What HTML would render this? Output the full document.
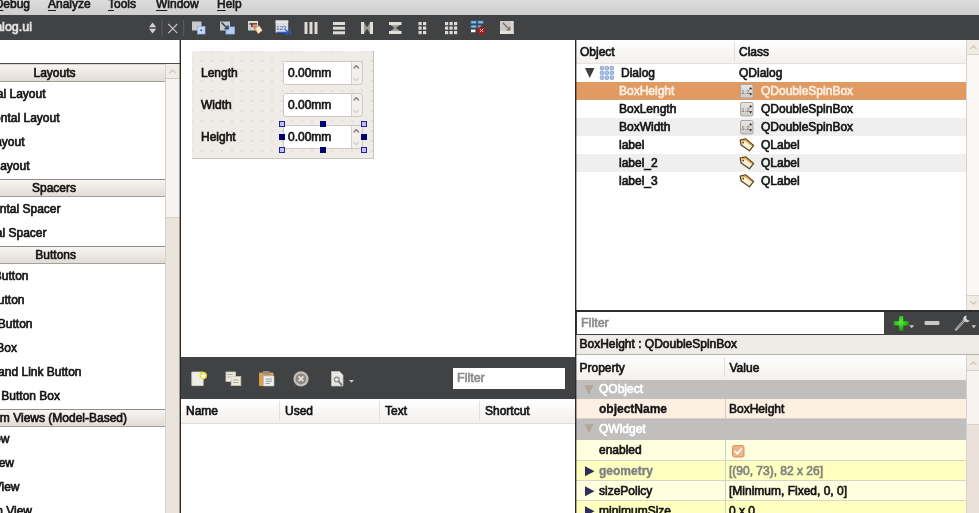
<!DOCTYPE html>
<html><head><meta charset="utf-8"><title>Qt Designer</title>
<style>
html,body{margin:0;padding:0;}
body{width:979px;height:513px;overflow:hidden;position:relative;background:#fff;font-family:"Liberation Sans",sans-serif;font-size:12px;color:#141414;-webkit-text-stroke:0.65px;}
.a{position:absolute;white-space:nowrap;}
svg{position:absolute;overflow:visible;}
#menubar{left:0;top:0;width:979px;height:15px;background:linear-gradient(#dcdcdc,#cecece);overflow:hidden;}
#menubar .m{position:absolute;top:-4px;line-height:16px;color:#1a1a1a;}
#menubar u{text-decoration-thickness:1px;text-underline-offset:1.5px;}
.dark{background:#404244;}
.hdr{position:absolute;left:-57px;width:222px;height:16px;border-top:1px solid #8e8a86;border-bottom:1px solid #a39f9b;background:linear-gradient(#f7f4f1,#e2dcd6);}
.hdr span{position:absolute;top:0;line-height:16px;white-space:nowrap;}
.it{position:absolute;height:24px;line-height:24px;white-space:nowrap;}
.row{position:absolute;left:576px;width:390px;height:18px;}
.row span,.prow span{position:absolute;top:0;white-space:nowrap;}
.row span{line-height:18px;}
.prow{position:absolute;left:576px;width:390px;}
.th{position:absolute;background:linear-gradient(#ffffff,#f3f0ed);}
.th span{position:absolute;white-space:nowrap;}
.sb{position:absolute;background:#f6f3f0;border-left:1px solid #d6d1cc;}
.sbb{position:absolute;left:0;width:14px;background:#f2ece6;}
.b{font-weight:bold;-webkit-text-stroke:0;}
</style></head><body><div id="root" style="position:absolute;left:0;top:0;width:979px;height:513px;will-change:transform;">
<div id="menubar" class="a">
 <span class="m" style="right:949px"><u>D</u>ebug</span>
 <span class="m" style="left:48px"><u>A</u>nalyze</span>
 <span class="m" style="left:108px"><u>T</u>ools</span>
 <span class="m" style="left:156px"><u>W</u>indow</span>
 <span class="m" style="left:217px"><u>H</u>elp</span>
</div>
<div class="a dark" style="left:0;top:15px;width:979px;height:25px;"></div>
<div class="a" style="right:947px;top:15px;height:25px;line-height:25px;color:#e6e6e6;font-size:12.5px;">dialog.ui</div>
<svg style="left:0;top:15px" width="979" height="25" viewBox="0 15 979 25">
 <path d="M149 27.2 L152.6 22.6 L156.2 27.2 Z M149 28.8 L152.6 33.4 L156.2 28.8 Z" fill="#d2d2d2"/>
 <rect x="161.5" y="20" width="1" height="16" fill="#5c5e60"/>
 <path d="M168.3 24 L177.3 33.2 M177.3 24 L168.3 33.2" stroke="#c4c4c4" stroke-width="1.1" fill="none"/>
 <rect x="183.2" y="20" width="1" height="16" fill="#5c5e60"/>
 <!-- icon1 -->
 <rect x="192" y="21.5" width="9.5" height="9" fill="#c9c9c9"/>
 <rect x="197.5" y="26.5" width="7.5" height="7.5" fill="#c4dcfa" stroke="#8fb4e8" stroke-width="0.8"/>
 <rect x="200.5" y="29.5" width="1.6" height="1.6" fill="#2a4a7a"/>
 <!-- icon2 -->
 <rect x="220" y="21.5" width="10" height="9" fill="#c9c9c9"/>
 <rect x="226" y="27" width="8.4" height="7" fill="#b4cff2" stroke="#8fb4e8" stroke-width="0.8"/>
 <path d="M221.5 22.5 L227.5 28.5 M224.5 28.8 L228 28.8 L228 25.2" stroke="#2c4668" stroke-width="1.6" fill="none"/>
 <!-- icon3 -->
 <rect x="248" y="21" width="10" height="9.5" fill="#c8d2cc"/>
 <rect x="248" y="21" width="10" height="2" fill="#e4dcd6"/>
 <path d="M249.5 23.2 H257 V24.6 H252.6 V27 H251.2 V24.6 H249.5 Z" fill="#4a2a22"/>
 <path d="M252.4 25 L257.4 26 L255 30.4 Z" fill="#e8704a"/>
 <path d="M255.2 28.6 L259 25.8 L262.2 30.4 L258.2 33.6 Z" fill="#fff0dc" stroke="#eea36e" stroke-width="1"/>
 <!-- icon4 -->
 <rect x="275.6" y="20.5" width="12.6" height="12" fill="#d6dbe4"/>
 <rect x="275.6" y="20.5" width="12.6" height="2.5" fill="#e8e6e4"/>
 <text x="276.3" y="29.6" font-size="6" fill="#3a58b0" style="-webkit-text-stroke:0">123</text>
 <path d="M277 32.3 L288 32.3 M285.5 29.8 L288.3 32.3 L285.5 34.8 M290.3 29.5 L290.3 35" stroke="#2a5ad8" stroke-width="1.3" fill="none"/>
 <!-- icon5 vertical bars -->
 <rect x="304.5" y="22" width="3" height="12" fill="#dedad6"/><rect x="309.5" y="22" width="3" height="12" fill="#dedad6"/><rect x="314.5" y="22" width="3" height="12" fill="#dedad6"/>
 <!-- icon6 horizontal bars -->
 <rect x="333" y="22" width="12" height="3" fill="#dedad6"/><rect x="333" y="26.7" width="12" height="3" fill="#dedad6"/><rect x="333" y="31.3" width="12" height="3" fill="#dedad6"/>
 <!-- icon7 H splitter -->
 <rect x="361" y="22" width="3.2" height="12" fill="#e2deda"/><rect x="369.8" y="22" width="3.2" height="12" fill="#e2deda"/>
 <path d="M364.2 23 L367.4 28 L364.2 33 Z" fill="#a3a19d"/><path d="M369.8 23 L366.6 28 L369.8 33 Z" fill="#a3a19d"/>
 <!-- icon8 V splitter -->
 <rect x="389" y="22" width="12.5" height="3" fill="#e2deda"/><rect x="389" y="31" width="12.5" height="3" fill="#e2deda"/>
 <path d="M390.5 25 L400 25 L395.2 28.4 Z" fill="#a3a19d"/><path d="M390.5 31 L400 31 L395.2 27.6 Z" fill="#a3a19d"/>
 <!-- icon9 2x3 grid -->
 <g fill="#dedad6"><rect x="418.5" y="22" width="3.2" height="3.2"/><rect x="423" y="22" width="3.2" height="3.2"/><rect x="418.5" y="26.5" width="3.2" height="3.2"/><rect x="423" y="26.5" width="3.2" height="3.2"/><rect x="418.5" y="31" width="3.2" height="3.2"/><rect x="423" y="31" width="3.2" height="3.2"/></g>
 <!-- icon10 3x3 grid -->
 <g fill="#dedad6"><rect x="445" y="22" width="3.2" height="3.2"/><rect x="449.5" y="22" width="3.2" height="3.2"/><rect x="454" y="22" width="3.2" height="3.2"/><rect x="445" y="26.5" width="3.2" height="3.2"/><rect x="449.5" y="26.5" width="3.2" height="3.2"/><rect x="454" y="26.5" width="3.2" height="3.2"/><rect x="445" y="31" width="3.2" height="3.2"/><rect x="449.5" y="31" width="3.2" height="3.2"/><rect x="454" y="31" width="3.2" height="3.2"/></g>
 <!-- icon11 break layout -->
 <g fill="#8fbfea" stroke="#3a78b0" stroke-width="0.7"><rect x="471" y="21" width="5.2" height="2.6"/><rect x="478" y="21" width="5.2" height="2.6"/><rect x="471" y="25.2" width="5.2" height="2.6"/><rect x="478" y="25.2" width="3" height="2.6"/></g>
 <rect x="471" y="29.6" width="4.4" height="2.6" fill="#ffffff"/>
 <circle cx="481.6" cy="30.4" r="4" fill="#a81a20"/>
 <path d="M479.9 28.7 L483.3 32.1 M483.3 28.7 L479.9 32.1" stroke="#f0c8c8" stroke-width="1"/>
 <!-- icon12 adjust size -->
 <rect x="500" y="21" width="13.5" height="13" fill="#cdc9c4"/>
 <rect x="500" y="30.8" width="13.5" height="3.2" fill="#e6e2de"/><rect x="510.6" y="21" width="2.9" height="13" fill="#dedad6"/>
 <path d="M503 23 L509.4 29.6 M506.4 30 L509.8 30 L509.8 26.6" stroke="#6f6b67" stroke-width="1.2" fill="none"/>
</svg>
<div class="a" style="left:0;top:63px;width:180px;height:1px;background:#4a4a4a;"></div>
<div class="hdr" style="top:64px;border-top-color:#d8d4d0"></div><div class="a" style="top:65px;right:903.5px;line-height:16px;">Layouts</div>
<div class="hdr" style="top:179px"></div><div class="a" style="top:180px;right:903px;line-height:16px;">Spacers</div>
<div class="hdr" style="top:246px"></div><div class="a" style="top:247px;right:903px;line-height:16px;">Buttons</div>
<div class="hdr" style="top:409px"></div><div class="a" style="top:410px;right:852px;line-height:16px;">Item Views (Model-Based)</div>
<div class="it" style="top:82px;right:933.5px">Vertical Layout</div>
<div class="it" style="top:106px;right:919.5px">Horizontal Layout</div>
<div class="it" style="top:130px;right:954.5px">Grid Layout</div>
<div class="it" style="top:154px;right:949.5px">Form Layout</div>
<div class="it" style="top:197px;right:918.5px">Horizontal Spacer</div>
<div class="it" style="top:221px;right:932.5px">Vertical Spacer</div>
<div class="it" style="top:264px;right:950.5px">Push Button</div>
<div class="it" style="top:288px;right:954.5px">Tool Button</div>
<div class="it" style="top:312px;right:946.5px">Radio Button</div>
<div class="it" style="top:336px;right:962px">Check Box</div>
<div class="it" style="top:360px;right:897.5px">Command Link Button</div>
<div class="it" style="top:384px;right:919px">Dialog Button Box</div>
<div class="it" style="top:427px;right:969.5px">List View</div>
<div class="it" style="top:451px;right:965px">Tree View</div>
<div class="it" style="top:475px;right:959.5px">Table View</div>
<div class="it" style="top:499px;right:947px">Column View</div>
<div class="sb" style="left:165px;top:64px;width:14px;height:449px;background:#ebe4dd;">
 <div class="sbb" style="top:0;height:14px;border-bottom:1px solid #d2ccc6;"></div>
 <div style="position:absolute;left:0;top:15px;width:14px;height:138px;background:#f6f3f0;border-bottom:1px solid #d8d2cc"></div>
</div>
<svg style="left:165px;top:64px" width="15" height="15"><path d="M4.5 9 L7.5 5.8 L10.5 9" stroke="#cfc7bf" stroke-width="1.2" fill="none"/></svg>
<div class="a" style="left:180px;top:40px;width:1px;height:473px;background:#2a2a2a;"></div><div class="a" style="left:179px;top:40px;width:1px;height:473px;background:rgba(42,42,42,0.4);"></div>
<div class="a" style="left:192px;top:51px;width:181px;height:107px;background-color:#efebe7;border-right:1px solid #c9c5c1;border-bottom:1px solid #c9c5c1;background-image:radial-gradient(circle,#d6d0ca 0.55px,transparent 0.85px);background-size:10px 10px;background-position:-5px -5px;"></div>
<div class="a" style="left:201px;top:61px;height:24px;line-height:24px;">Length</div>
<div class="a" style="left:283px;top:61px;width:78px;height:22px;border:1px solid #cfc8c2;border-radius:3px;background:#f3efec;overflow:hidden;"><div style="position:absolute;left:0;top:0;width:67px;height:22px;background:#fff;border-right:1px solid #d6d0ca;"></div><span style="position:absolute;left:4px;top:0;line-height:23px;">0.00mm</span></div>
<svg style="left:350px;top:61px" width="13" height="24"><path d="M3.6 7.4 L6.3 4.6 L9 7.4" stroke="#6a6764" stroke-width="1.1" fill="none"/><path d="M3.6 17 L6.3 19.8 L9 17" stroke="#d2cdc8" stroke-width="1.1" fill="none"/></svg>
<div class="a" style="left:201px;top:93px;height:24px;line-height:24px;">Width</div>
<div class="a" style="left:283px;top:93px;width:78px;height:22px;border:1px solid #cfc8c2;border-radius:3px;background:#f3efec;overflow:hidden;"><div style="position:absolute;left:0;top:0;width:67px;height:22px;background:#fff;border-right:1px solid #d6d0ca;"></div><span style="position:absolute;left:4px;top:0;line-height:23px;">0.00mm</span></div>
<svg style="left:350px;top:93px" width="13" height="24"><path d="M3.6 7.4 L6.3 4.6 L9 7.4" stroke="#6a6764" stroke-width="1.1" fill="none"/><path d="M3.6 17 L6.3 19.8 L9 17" stroke="#d2cdc8" stroke-width="1.1" fill="none"/></svg>
<div class="a" style="left:201px;top:125px;height:24px;line-height:24px;">Height</div>
<div class="a" style="left:283px;top:125px;width:78px;height:22px;border:1px solid #cfc8c2;border-radius:3px;background:#f3efec;overflow:hidden;"><div style="position:absolute;left:0;top:0;width:67px;height:22px;background:#fff;border-right:1px solid #d6d0ca;"></div><span style="position:absolute;left:4px;top:0;line-height:23px;">0.00mm</span></div>
<svg style="left:350px;top:125px" width="13" height="24"><path d="M3.6 7.4 L6.3 4.6 L9 7.4" stroke="#6a6764" stroke-width="1.1" fill="none"/><path d="M3.6 17 L6.3 19.8 L9 17" stroke="#d2cdc8" stroke-width="1.1" fill="none"/></svg>
<div class="a" style="left:279px;top:121px;width:4px;height:4px;border:1px solid #2020a0;background:#c0c0f0;"></div>
<div class="a" style="left:361px;top:121px;width:4px;height:4px;border:1px solid #2020a0;background:#c0c0f0;"></div>
<div class="a" style="left:279px;top:147px;width:4px;height:4px;border:1px solid #2020a0;background:#c0c0f0;"></div>
<div class="a" style="left:361px;top:147px;width:4px;height:4px;border:1px solid #2020a0;background:#c0c0f0;"></div>
<div class="a" style="left:320px;top:121px;width:6px;height:6px;background:#00006e;"></div>
<div class="a" style="left:320px;top:147px;width:6px;height:6px;background:#00006e;"></div>
<div class="a" style="left:279px;top:134px;width:6px;height:6px;background:#00006e;"></div>
<div class="a" style="left:361px;top:134px;width:6px;height:6px;background:#00006e;"></div>
<div class="a dark" style="left:181px;top:357px;width:394px;height:42px;"></div>
<div class="a" style="left:453px;top:368px;width:112px;height:21px;background:#fff;"><span style="position:absolute;left:4px;line-height:21px;color:#8c8c8c;font-size:12.5px;">Filter</span></div>
<div class="th" style="left:181px;top:399px;width:394px;height:24px;border-bottom:1px solid #e2deda;"><span style="left:5px;line-height:25px;">Name</span><span style="left:104px;line-height:25px;">Used</span><span style="left:204px;line-height:25px;">Text</span><span style="left:304px;line-height:25px;">Shortcut</span><i style="position:absolute;left:98px;top:2px;width:1px;height:20px;background:#e4e0dc"></i><i style="position:absolute;left:198px;top:2px;width:1px;height:20px;background:#e4e0dc"></i><i style="position:absolute;left:298px;top:2px;width:1px;height:20px;background:#e4e0dc"></i></div>
<svg style="left:181px;top:357px" width="394" height="42" viewBox="181 357 394 42">
 <!-- new -->
 <path d="M191.8 372 L203.2 372 L203.2 385.6 L191.8 385.6 Z" fill="#efede8" stroke="#d6d4ce" stroke-width="0.8"/>
 <circle cx="203.2" cy="375.6" r="3.8" fill="#e9d838"/>
 <path d="M203.2 372.6 L204.1 374.7 L206.3 374.9 L204.6 376.4 L205.1 378.6 L203.2 377.4 L201.3 378.6 L201.8 376.4 L200.1 374.9 L202.3 374.7 Z" fill="#fffef4"/>
 <!-- copy -->
 <rect x="226" y="372" width="9.5" height="9.5" fill="#f0eadc" stroke="#cfc8b8" stroke-width="0.8"/>
 <rect x="231.2" y="376.6" width="9.6" height="9" fill="#f0eadc" stroke="#cfc8b8" stroke-width="0.8"/>
 <path d="M227.5 374.5 H233 M227.5 377 H230" stroke="#a0a09c" stroke-width="0.9"/>
 <path d="M233 380 H238.5 M233 382.5 H238.5" stroke="#a0a09c" stroke-width="0.9"/>
 <!-- paste -->
 <rect x="259" y="372.5" width="14.5" height="13.5" rx="1" fill="#d9a04e"/>
 <rect x="263" y="371" width="6.5" height="3.5" fill="#8e8e8a"/>
 <rect x="263.5" y="376" width="10.5" height="10" fill="#f2f2ee" stroke="#bdbdb8" stroke-width="0.6"/>
 <path d="M265.5 379 H272 M265.5 381.2 H272 M265.5 383.4 H270" stroke="#7f8fa8" stroke-width="0.9"/>
 <!-- delete -->
 <circle cx="301" cy="378.8" r="7.6" fill="#c2beba"/><circle cx="301" cy="378.8" r="5.4" fill="#8f8884"/>
 <path d="M298.6 376.4 L303.4 381.2 M303.4 376.4 L298.6 381.2" stroke="#ece2dc" stroke-width="1.7"/>
 <!-- configure -->
 <path d="M331.5 371.5 L339.5 371.5 L343 375 L343 386 L331.5 386 Z" fill="#e6e6e2" stroke="#bdbdb8" stroke-width="0.8"/>
 <circle cx="336.8" cy="379.6" r="2.4" fill="none" stroke="#8a8a86" stroke-width="1.2"/>
 <path d="M338.6 381.4 L342.2 385.4" stroke="#7a7a76" stroke-width="1.8"/>
 <path d="M349 380 L354 380 L351.5 382.8 Z" fill="#c8c8c8"/>
</svg>
<div class="a" style="left:575px;top:40px;width:1px;height:473px;background:#2a2a2a;"></div>
<div class="th" style="left:576px;top:40px;width:390px;height:23px;border-bottom:1px solid #e6e2de;"><span style="left:4px;line-height:24px;">Object</span><span style="left:163px;line-height:24px;">Class</span><i style="position:absolute;left:158px;top:2px;width:1px;height:19px;background:#e2deda"></i></div>
<div class="row" style="top:64px;background:#fff;"><span style="left:45px">Dialog</span><span style="left:163px">QDialog</span></div>
<div class="row" style="top:82px;background:#e09a62;color:#fbeee2;"><span style="left:43px">BoxHeight</span><span style="left:185px">QDoubleSpinBox</span></div>
<svg style="left:740px;top:84px" width="14" height="15"><defs><linearGradient id="sg82" x1="0" y1="0" x2="0" y2="1"><stop offset="0" stop-color="#e8e5e2"/><stop offset="1" stop-color="#cfcbc7"/></linearGradient></defs><rect x="0.5" y="0.5" width="12.5" height="13.5" rx="1.5" fill="url(#sg82)" stroke="#aaa6a2"/><text x="1.3" y="9.8" font-size="6" fill="#666" style="-webkit-text-stroke:0">1.2</text><path d="M9 5.2 L10.6 3 L12.2 5.2 Z M9 9.3 L10.6 11.5 L12.2 9.3 Z" fill="#2a2a2a"/></svg>
<div class="row" style="top:100px;background:#fff;"><span style="left:43px">BoxLength</span><span style="left:185px">QDoubleSpinBox</span></div>
<svg style="left:740px;top:102px" width="14" height="15"><defs><linearGradient id="sg100" x1="0" y1="0" x2="0" y2="1"><stop offset="0" stop-color="#e8e5e2"/><stop offset="1" stop-color="#cfcbc7"/></linearGradient></defs><rect x="0.5" y="0.5" width="12.5" height="13.5" rx="1.5" fill="url(#sg100)" stroke="#aaa6a2"/><text x="1.3" y="9.8" font-size="6" fill="#666" style="-webkit-text-stroke:0">1.2</text><path d="M9 5.2 L10.6 3 L12.2 5.2 Z M9 9.3 L10.6 11.5 L12.2 9.3 Z" fill="#2a2a2a"/></svg>
<div class="row" style="top:118px;background:#efefef;"><span style="left:43px">BoxWidth</span><span style="left:185px">QDoubleSpinBox</span></div>
<svg style="left:740px;top:120px" width="14" height="15"><defs><linearGradient id="sg118" x1="0" y1="0" x2="0" y2="1"><stop offset="0" stop-color="#e8e5e2"/><stop offset="1" stop-color="#cfcbc7"/></linearGradient></defs><rect x="0.5" y="0.5" width="12.5" height="13.5" rx="1.5" fill="url(#sg118)" stroke="#aaa6a2"/><text x="1.3" y="9.8" font-size="6" fill="#666" style="-webkit-text-stroke:0">1.2</text><path d="M9 5.2 L10.6 3 L12.2 5.2 Z M9 9.3 L10.6 11.5 L12.2 9.3 Z" fill="#2a2a2a"/></svg>
<div class="row" style="top:136px;background:#fff;"><span style="left:43px">label</span><span style="left:185px">QLabel</span></div>
<svg style="left:739px;top:138px" width="16" height="14"><path d="M1.2 2.2 L6.5 0.8 L14.6 7.4 L10.4 12.8 L2.2 7 Z" fill="#fbf3e2" stroke="#5e4218" stroke-width="1.3" stroke-linejoin="round"/><path d="M2.6 3.2 L6.2 2.3 L12.6 7.5" stroke="#e9a63a" stroke-width="1.3" fill="none"/><circle cx="4.2" cy="4.6" r="0.9" fill="#5e4218"/></svg>
<div class="row" style="top:154px;background:#efefef;"><span style="left:43px">label_2</span><span style="left:185px">QLabel</span></div>
<svg style="left:739px;top:156px" width="16" height="14"><path d="M1.2 2.2 L6.5 0.8 L14.6 7.4 L10.4 12.8 L2.2 7 Z" fill="#fbf3e2" stroke="#5e4218" stroke-width="1.3" stroke-linejoin="round"/><path d="M2.6 3.2 L6.2 2.3 L12.6 7.5" stroke="#e9a63a" stroke-width="1.3" fill="none"/><circle cx="4.2" cy="4.6" r="0.9" fill="#5e4218"/></svg>
<div class="row" style="top:172px;background:#fff;"><span style="left:43px">label_3</span><span style="left:185px">QLabel</span></div>
<svg style="left:739px;top:174px" width="16" height="14"><path d="M1.2 2.2 L6.5 0.8 L14.6 7.4 L10.4 12.8 L2.2 7 Z" fill="#fbf3e2" stroke="#5e4218" stroke-width="1.3" stroke-linejoin="round"/><path d="M2.6 3.2 L6.2 2.3 L12.6 7.5" stroke="#e9a63a" stroke-width="1.3" fill="none"/><circle cx="4.2" cy="4.6" r="0.9" fill="#5e4218"/></svg>
<svg style="left:584px;top:64px" width="32" height="18"><path d="M1 4 L10.5 4 L5.75 14 Z" fill="#3c3c3c"/>
<g fill="#a9c6e8" stroke="#6f8fbd" stroke-width="0.7"><rect x="16.3" y="2.4" width="3.4" height="3.4" rx="0.8"/><rect x="21.2" y="2.4" width="3.4" height="3.4" rx="0.8"/><rect x="26.1" y="2.4" width="3.4" height="3.4" rx="0.8"/><rect x="16.3" y="7.2" width="3.4" height="3.4" rx="0.8"/><rect x="21.2" y="7.2" width="3.4" height="3.4" rx="0.8"/><rect x="26.1" y="7.2" width="3.4" height="3.4" rx="0.8"/><rect x="16.3" y="12" width="3.4" height="3.4" rx="0.8"/><rect x="21.2" y="12" width="3.4" height="3.4" rx="0.8"/><rect x="26.1" y="12" width="3.4" height="3.4" rx="0.8"/></g></svg>
<div class="sb" style="left:966px;top:40px;width:13px;height:270px;background:#faf7f4;">
 <div class="sbb" style="top:0;height:14px;border-bottom:1px solid #d8d2cc;"></div>
 <div class="sbb" style="top:255px;height:15px;border-top:1px solid #d8d2cc;"></div>
</div>
<svg style="left:966px;top:40px" width="13" height="270"><path d="M4.5 9 L7.5 5.8 L10.5 9" stroke="#cfc7bf" stroke-width="1.2" fill="none"/><path d="M4.5 261 L7.5 264.2 L10.5 261" stroke="#cfc7bf" stroke-width="1.2" fill="none"/></svg>
<div class="a dark" style="left:576px;top:310px;width:403px;height:25px;"></div>
<div class="a" style="left:575px;top:310px;width:404px;height:2px;background:#2e2e2e;"></div>
<div class="a" style="left:577px;top:312px;width:307px;height:22px;background:#fff;"><span style="position:absolute;left:4px;line-height:22px;color:#8c8c8c;font-size:12.5px;">Filter</span></div>
<svg style="left:884px;top:310px" width="95" height="25" viewBox="884 310 95 25">
 <defs><radialGradient id="pg" cx="0.45" cy="0.4" r="0.6"><stop offset="0" stop-color="#5cf03a"/><stop offset="0.6" stop-color="#2fc21c"/><stop offset="1" stop-color="#1f9a14"/></radialGradient></defs>
 <path d="M899.1 316 H903.3 V321.2 H908.6 V325.4 H903.3 V330.7 H899.1 V325.4 H893.8 V321.2 H899.1 Z" fill="url(#pg)"/>
 <path d="M909.2 325.3 L914.2 325.3 L911.7 328.2 Z" fill="#c8c8c8"/>
 <rect x="924.6" y="321" width="14.8" height="4.1" rx="0.8" fill="#cbc7c3"/>
 <path d="M956 329.6 L965.2 319.4" stroke="#b4b4b4" stroke-width="2.4" stroke-linecap="round"/>
 <path d="M956.2 329.4 L965 319.6" stroke="#5a5a5a" stroke-width="0.7"/>
 <path d="M964.2 316.2 A3.6 3.6 0 1 0 969.9 320.6 L967.6 320.2 L966.2 318.4 L966.6 315.6 Z" fill="#d4d4d4"/>
 <path d="M971.4 325.3 L976.2 325.3 L973.8 328.2 Z" fill="#c8c8c8"/>
</svg>
<div class="a" style="left:576px;top:335px;width:403px;height:19px;background:#efebe7;border-bottom:1px solid #b4b0ac;"><span style="position:absolute;left:3.5px;line-height:19px;">BoxHeight : QDoubleSpinBox</span></div>
<div class="th" style="left:576px;top:355px;width:390px;height:25px;"><span style="left:3.5px;top:1px;line-height:25px;">Property</span><span style="left:153.5px;top:1px;line-height:25px;">Value</span><i style="position:absolute;left:148px;top:2px;width:1px;height:20px;background:#e2deda"></i></div>
<div class="prow" style="top:380px;height:19px;background:#c0bfbe;"><span style="left:23px;line-height:19px;color:#fff;">QObject</span><svg style="left:9px;top:0" width="12" height="20"><path d="M-0.5 5.2 L8.5 5.2 L4 14.6 Z" fill="#b3a697"/></svg></div>
<div class="prow" style="top:399px;height:20px;background:#fdf0e2;"><span style="left:23px;line-height:20px;font-weight:bold;-webkit-text-stroke:0.35px;">objectName</span><span style="left:153px;line-height:20px;">BoxHeight</span><i style="position:absolute;left:149px;top:0;width:1px;height:20px;background:#cfcbc7"></i><i style="position:absolute;left:0;bottom:0;width:390px;height:1px;background:#d8d4c8"></i></div>
<div class="prow" style="top:419px;height:21px;background:#c0bfbe;"><span style="left:23px;line-height:21px;color:#fff;">QWidget</span><svg style="left:9px;top:0" width="12" height="20"><path d="M-0.5 5.2 L8.5 5.2 L4 14.6 Z" fill="#b3a697"/></svg></div>
<div class="prow" style="top:440px;height:21px;background:#ffffdf;"><span style="left:23px;line-height:20px;">enabled</span><span style="left:153px;line-height:20px;"></span><i style="position:absolute;left:149px;top:0;width:1px;height:21px;background:#cfcbc7"></i><i style="position:absolute;left:0;bottom:0;width:390px;height:1px;background:#d8d4c8"></i><svg style="left:156px;top:4.5px" width="13" height="13"><rect x="0.5" y="0.5" width="11.5" height="11.5" rx="2" fill="#eeb48a" stroke="#d8905e"/><path d="M2.8 6 L5.3 8.8 L9.8 3.4" stroke="#fff" stroke-width="1.7" fill="none"/></svg></div>
<div class="prow" style="top:461px;height:20px;background:#ffffbf;"><span style="left:23px;line-height:20px;font-weight:bold;-webkit-text-stroke:0.35px;color:#808080;">geometry</span><span style="left:153px;line-height:20px;color:#808080;">[(90, 73), 82 x 26]</span><i style="position:absolute;left:149px;top:0;width:1px;height:20px;background:#cfcbc7"></i><i style="position:absolute;left:0;bottom:0;width:390px;height:1px;background:#d8d4c8"></i><svg style="left:9px;top:0" width="12" height="20"><path d="M0 5.2 L9.5 10.2 L0 15.2 Z" fill="#2e2e5e"/></svg></div>
<div class="prow" style="top:481px;height:20px;background:#ffffdf;"><span style="left:23px;line-height:20px;">sizePolicy</span><span style="left:153px;line-height:20px;">[Minimum, Fixed, 0, 0]</span><i style="position:absolute;left:149px;top:0;width:1px;height:20px;background:#cfcbc7"></i><i style="position:absolute;left:0;bottom:0;width:390px;height:1px;background:#d8d4c8"></i><svg style="left:9px;top:0" width="12" height="20"><path d="M0 5.2 L9.5 10.2 L0 15.2 Z" fill="#2e2e5e"/></svg></div>
<div class="prow" style="top:501px;height:20px;background:#ffffbf;"><span style="left:23px;line-height:20px;">minimumSize</span><span style="left:153px;line-height:20px;">0 x 0</span><i style="position:absolute;left:149px;top:0;width:1px;height:20px;background:#cfcbc7"></i><i style="position:absolute;left:0;bottom:0;width:390px;height:1px;background:#d8d4c8"></i><svg style="left:9px;top:0" width="12" height="20"><path d="M0 5.2 L9.5 10.2 L0 15.2 Z" fill="#2e2e5e"/></svg></div>
<div class="sb" style="left:966px;top:355px;width:13px;height:158px;background:#e9e1da;">
 <div class="sbb" style="top:0;height:15px;border-bottom:1px solid #d8d2cc;"></div>
 <div style="position:absolute;left:0;top:16px;width:13px;height:53px;background:#f6f3f0;border-bottom:1px solid #d8d2cc"></div>
</div>
<svg style="left:966px;top:356px" width="13" height="20"><path d="M4.5 9 L7.5 5.8 L10.5 9" stroke="#cfc7bf" stroke-width="1.2" fill="none"/></svg>
<div class="a" style="left:576px;top:40px;width:1px;height:473px;background:rgba(42,42,42,0.4);"></div>
</div></body></html>
